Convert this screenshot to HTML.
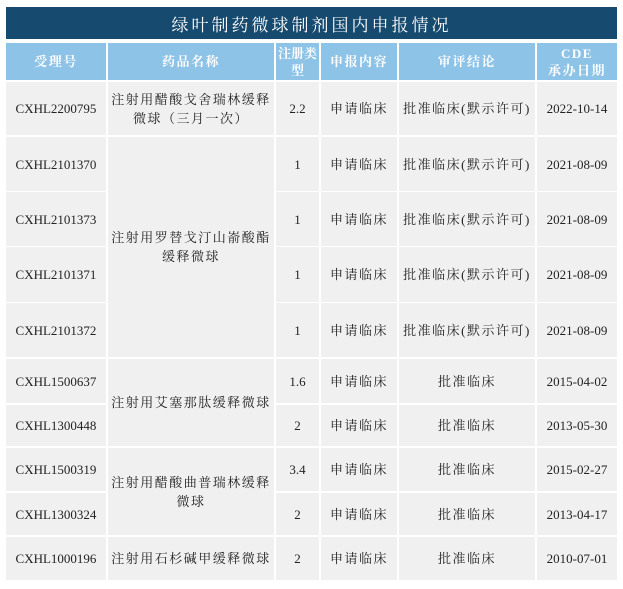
<!DOCTYPE html>
<html><head><meta charset="utf-8"><style>
body{margin:0;width:623px;height:589px;background:#fff;position:relative;overflow:hidden;font-family:"Liberation Serif","Noto Serif CJK SC",serif;}
.t{position:absolute;left:6px;top:7px;width:611px;height:32px;background:#164a6e;color:#fff;font-size:17px;display:flex;align-items:center;justify-content:center;letter-spacing:3px;font-family:"Liberation Serif","Noto Serif CJK SC",serif;}
.c{position:absolute;background:#f0f0f0;color:#222;font-size:13px;display:flex;align-items:center;justify-content:center;text-align:center;line-height:19px;}
.z{letter-spacing:1.5px;}
.h{background:#8ec3e8;color:#fff;font-weight:bold;line-height:17px;}
.n{letter-spacing:0;}
</style></head><body>
<div class="t">绿叶制药微球制剂国内申报情况</div>
<div id="g"></div>
<script>
var cols=[[6,106],[108,274],[276,319],[321,397],[399,535],[537,617]];
var rows=[[43,80],[82,135],[137,191],[192,246],[247,302],[303,357],[359,403],[405,446],[448,491],[493,535],[537,580]];
var g=document.getElementById('g'),h='';
function cell(c0,c1,r0,r1,txt,cls){var x=cols[c0][0],w=cols[c1][1]-x,y=rows[r0][0],hh=rows[r1][1]-y;h+='<div class="c '+(cls||'')+'" style="left:'+x+'px;top:'+y+'px;width:'+w+'px;height:'+hh+'px">'+txt+'</div>';}
var hd=['受理号','药品名称','注册类<br>型','申报内容','审评结论','CDE<br>承办日期'];
hd.forEach(function(t,i){cell(i,i,0,0,t,i==2?'h n':'h z');});
var d=[['CXHL2200795','2.2','批准临床(默示许可)','2022-10-14'],
['CXHL2101370','1','批准临床(默示许可)','2021-08-09'],
['CXHL2101373','1','批准临床(默示许可)','2021-08-09'],
['CXHL2101371','1','批准临床(默示许可)','2021-08-09'],
['CXHL2101372','1','批准临床(默示许可)','2021-08-09'],
['CXHL1500637','1.6','批准临床','2015-04-02'],
['CXHL1300448','2','批准临床','2013-05-30'],
['CXHL1500319','3.4','批准临床','2015-02-27'],
['CXHL1300324','2','批准临床','2013-04-17'],
['CXHL1000196','2','批准临床','2010-07-01']];
d.forEach(function(r,i){var R=i+1;cell(0,0,R,R,r[0]);cell(2,2,R,R,r[1]);cell(3,3,R,R,'申请临床','z');cell(4,4,R,R,r[2],'z');cell(5,5,R,R,r[3]);});
cell(1,1,1,1,'注射用醋酸戈舍瑞林缓释<br>微球（三月一次）','z');
cell(1,1,2,5,'注射用罗替戈汀山嵛酸酯<br>缓释微球','z');
cell(1,1,6,7,'注射用艾塞那肽缓释微球','z');
cell(1,1,8,9,'注射用醋酸曲普瑞林缓释<br>微球','z');
cell(1,1,10,10,'注射用石杉碱甲缓释微球','z');
g.innerHTML=h;
</script>
</body></html>
